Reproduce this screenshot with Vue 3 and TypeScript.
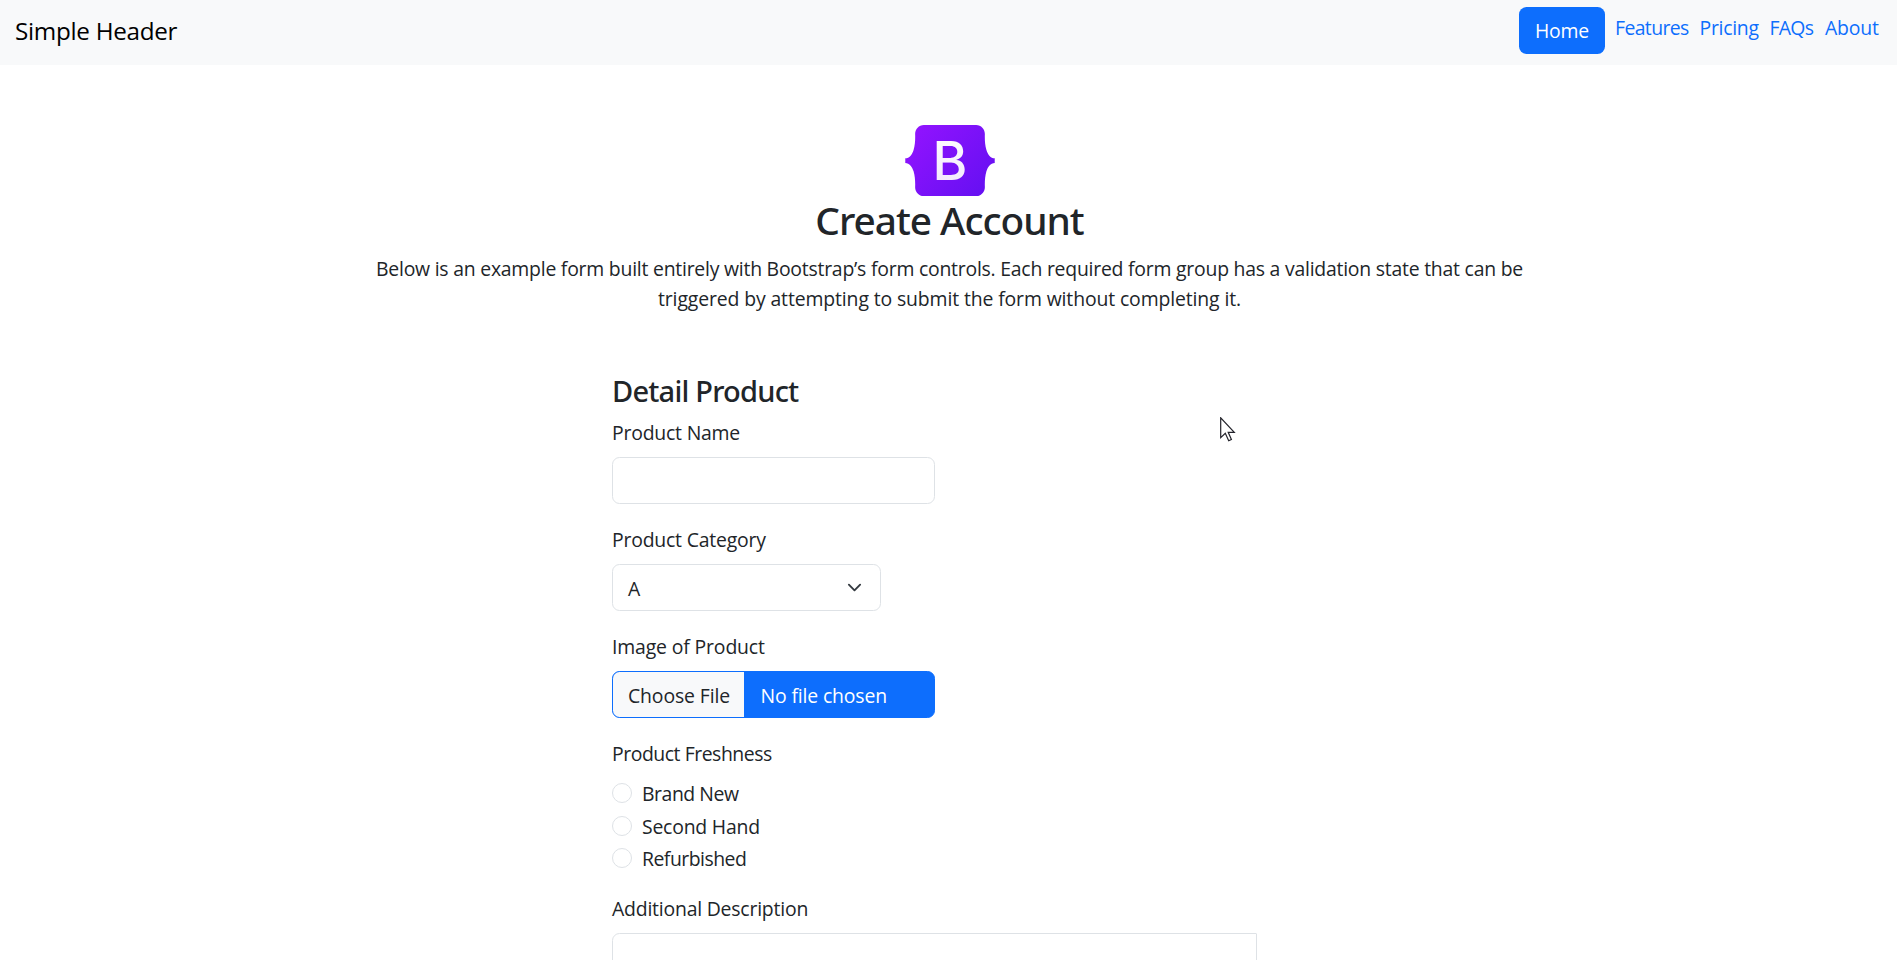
<script setup lang="ts">
import { ref } from 'vue'

interface NavItem { label: string; name: string }

const navItems: NavItem[] = [
  { label: 'Features', name: 'features' },
  { label: 'Pricing', name: 'pricing' },
  { label: 'FAQs', name: 'faqs' },
  { label: 'About', name: 'about' },
]

const conditions = [
  { label: 'Brand New', name: 'brand-new' },
  { label: 'Second Hand', name: 'second-hand' },
  { label: 'Refurbished', name: 'refurbished' },
]

const productName = ref('')
const condition = ref('')
const description = ref('')
</script>

<template>
  <div class="page">
    <header class="header">
      <a class="brand">Simple Header</a>
      <nav class="nav">
        <a class="pill">Home</a>
        <a v-for="item in navItems" :key="item.name" class="link" :class="item.name">{{ item.label }}</a>
      </nav>
    </header>

    <section class="intro">
      <svg class="logo" viewBox="0 0 118 94" role="img" aria-label="Bootstrap">
        <defs>
          <linearGradient id="badge" x1="14" y1="6" x2="104" y2="90" gradientUnits="userSpaceOnUse">
            <stop offset="0" stop-color="#9013fe" />
            <stop offset="1" stop-color="#6610f2" />
          </linearGradient>
          <linearGradient id="letter" x1="0" y1="0" x2="0" y2="1">
            <stop offset="0" stop-color="#fff" />
            <stop offset="1" stop-color="#f1e5fc" />
          </linearGradient>
        </defs>
        <path fill="url(#badge)" d="M24.509 0c-6.733 0-11.715 5.893-11.492 12.284.214 6.14-.064 14.092-2.066 20.577C8.943 39.365 5.547 43.485 0 44.014v5.972c5.547.529 8.943 4.649 10.951 11.153 2.002 6.485 2.28 14.437 2.066 20.577C12.794 88.106 17.776 94 24.51 94H93.5c6.733 0 11.714-5.893 11.491-12.284-.214-6.14.064-14.092 2.066-20.577 2.009-6.504 5.396-10.624 10.943-11.153v-5.972c-5.547-.529-8.934-4.649-10.943-11.153-2.002-6.484-2.28-14.437-2.066-20.577C105.214 5.894 100.233 0 93.5 0H24.508z" />
        <text class="letter" x="35.8" y="72.7" fill="url(#letter)">B</text>
      </svg>
      <h1>Create Account</h1>
      <p class="first">Below is an example form built entirely with Bootstrap’s form controls. Each required form group has a validation state that can be</p>
      <p class="second">triggered by attempting to submit the form without completing it.</p>
    </section>

    <form class="form" @submit.prevent>
      <h2>Detail Product</h2>

      <div class="group">
        <label class="label">Product Name</label>
        <input v-model="productName" class="control" type="text" />
      </div>

      <div class="group">
        <label class="label">Product Category</label>
        <div class="control select">
          <span>A</span>
          <svg class="chevron" viewBox="0 0 16 16"><path d="m2 5 6 6 6-6" /></svg>
        </div>
      </div>

      <div class="group">
        <label class="label image">Image of Product</label>
        <div class="control file">
          <span class="choose">Choose File</span>
          <span class="chosen">No file chosen</span>
        </div>
      </div>

      <div class="group conditions">
        <label class="label freshness">Product Freshness</label>
        <label v-for="item in conditions" :key="item.name" class="option">
          <input v-model="condition" type="radio" name="condition" :value="item.name" />
          <span :class="item.name">{{ item.label }}</span>
        </label>
      </div>

      <div class="group">
        <label class="label">Additional Description</label>
        <textarea v-model="description" class="control description"></textarea>
      </div>
    </form>

    <svg class="cursor" viewBox="0 0 16 25">
      <path d="M.7.8v19.8l4.6-4.3 3.4 7.4 2.7-1.2-3.2-7.2h6.1z" />
    </svg>
  </div>
</template>

<style>
html, body { margin: 0; overflow: hidden; }
</style>

<style scoped>
* { box-sizing: border-box; }
.page {
  position: relative;
  height: 960px;
  overflow: hidden;
  background: #fff;
  color: #212529;
  font: 400 19.4px/30px "Open Sans", "Noto Sans", sans-serif;
  letter-spacing: -0.2px;
}
.header {
  display: flex;
  justify-content: space-between;
  height: 65px;
  padding: 7px 17px 0 15px;
  background: #f8f9fa;
}
.brand { padding-top: 5px; color: #000; font-size: 24.25px; line-height: 38px; letter-spacing: -0.3px; white-space: nowrap; }
.nav { display: flex; color: #0d6efd; white-space: nowrap; }
.pill {
  width: 86px;
  height: 47px;
  margin-right: 10px;
  padding: 9px 0 0 16px;
  border-radius: 7.5px;
  background: #0d6efd;
  color: #fff;
}
.link { padding-top: 6px; }
.features { width: 84.5px; letter-spacing: -0.61px; }
.pricing { width: 70px; letter-spacing: -0.26px; }
.faqs { width: 55.5px; letter-spacing: -0.7px; }
.about { width: 55px; }

.intro { display: flex; flex-direction: column; align-items: center; padding: 60px 0 0 2px; text-align: center; }
.logo { display: block; width: 90px; height: 71.25px; }
.letter { font: 500 70px Inter, sans-serif; letter-spacing: 0; }
h1 {
  height: 48px;
  margin: 0 0 9.75px;
  font: 500 38.8px/48px "Noto Sans", sans-serif;
  letter-spacing: -1.02px;
}
p { height: 30px; margin: 0; white-space: nowrap; }
.first { letter-spacing: -0.226px; }
.second { letter-spacing: -0.12px; }

.form { width: 645px; margin: 59px 0 0 612px; }
h2 { margin: 0 0 9px; font: 500 29px/36px "Noto Sans", sans-serif; letter-spacing: -0.78px; }
.group { margin-bottom: 21px; }
.label { display: block; margin-bottom: 9px; }
.image { letter-spacing: -0.14px; }
.freshness, .brand-new { letter-spacing: -0.45px; }
.refurbished { letter-spacing: -0.5px; }
.control {
  display: block;
  width: 323px;
  height: 47px;
  margin: 0;
  border: 1px solid #dee2e6;
  border-radius: 7.5px;
  background: #fff;
  outline: none;
  font: inherit;
}
.select { display: flex; align-items: center; justify-content: space-between; width: 269px; padding: 0 18px 0 15px; }
.select span { padding-top: 2px; }
.chevron { width: 15px; height: 15px; fill: none; stroke: #343a40; stroke-width: 2; stroke-linecap: round; stroke-linejoin: round; }
.file { display: flex; overflow: hidden; border-color: #0d6efd; background: #0d6efd; color: #fff; line-height: 47px; }
.choose { width: 131px; padding-left: 15px; background: #f8f9fa; color: #212529; letter-spacing: -0.12px; }
.chosen { padding-left: 16.5px; letter-spacing: -0.14px; }
.conditions { margin-bottom: 18.5px; }
.option { display: flex; gap: 10px; height: 30px; margin-bottom: 2.5px; }
.option input {
  width: 20px;
  height: 20px;
  margin: 4px 0 0;
  border: 1px solid #dee2e6;
  border-radius: 50%;
  background: #fff;
  appearance: none;
}
.conditions > .label { margin-bottom: 10px; }
.conditions + .group { padding-top: 1.5px; }
.description { width: 645px; height: 126px; border-radius: 7.5px 1px 1px 7.5px; resize: none; }
.cursor { position: absolute; left: 1220px; top: 417px; width: 16px; height: 25px; fill: #fff; stroke: #23232b; stroke-width: 1.2; }
</style>
